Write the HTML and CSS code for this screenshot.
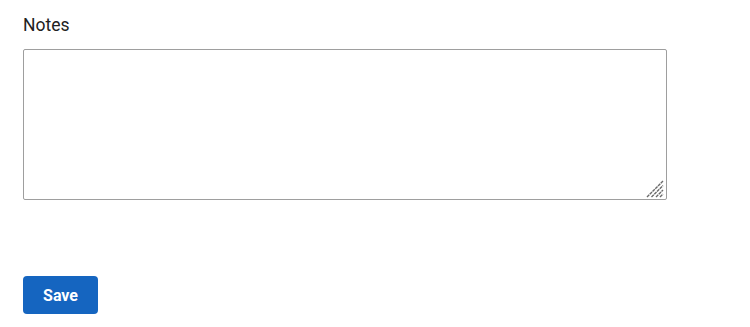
FILE: index.html
```html
<!DOCTYPE html>
<html lang="en">
<head>
    <meta charset="UTF-8">
    <meta name="viewport" content="width=device-width, initial-scale=1.0">
    <title>Notes</title>
    <link rel="stylesheet" href="styles.css">
</head>
<body>
    <form class="notes-form">
        <label for="notes" class="notes-label">Notes</label>
        <div class="notes-field">
            <textarea id="notes" class="notes-input"></textarea>
            <!-- corner grip drawn over the native one -->
            <svg class="grip" width="20" height="20" viewBox="0 0 20 20" aria-hidden="true">
                <rect width="20" height="20" fill="#fff"/>
                <path d="M2 19 L18 3 M6.5 19 L18 7.5 M11 19 L18 12 M15 19 L18 16" stroke="#6a6a6a" stroke-width="1.4" stroke-dasharray="3.2 0.7"/>
            </svg>
        </div>
        <div class="actions">
            <button type="button" class="save-btn">Save</button>
        </div>
    </form>
</body>
</html>
```

FILE: styles.css
```css
/* Reset */
* {
    margin: 0;
    padding: 0;
    box-sizing: border-box;
}

body {
    font-family: Roboto, "Liberation Sans", Arial, sans-serif;
    background-color: #fff;
    color: #212121;
}

.notes-form {
    display: flex;
    flex-direction: column;
    align-items: flex-start;
    padding: 14px 23px;
}

.notes-label {
    font-size: 17.5px;
    line-height: 22px;
    margin-bottom: 13px;
}

.notes-field {
    position: relative;
    line-height: 0;
}

.notes-input {
    width: 644px;
    height: 151px;
    border: 1px solid #9e9e9e;
    border-radius: 2px;
    font-family: inherit;
    font-size: 15px;
    line-height: 20px;
    padding: 6px 8px;
    resize: both;
}

.grip {
    position: absolute;
    right: 2px;
    bottom: 2px;
    pointer-events: none;
}

.actions {
    margin-top: 76px;
}

.save-btn {
    background-color: #1565c0;
    color: #fff;
    border: none;
    border-radius: 4px;
    width: 75px;
    height: 38px;
    font-family: inherit;
    font-size: 16px;
    font-weight: bold;
    cursor: pointer;
}

.save-btn:hover {
    background-color: #0d47a1;
}
```
